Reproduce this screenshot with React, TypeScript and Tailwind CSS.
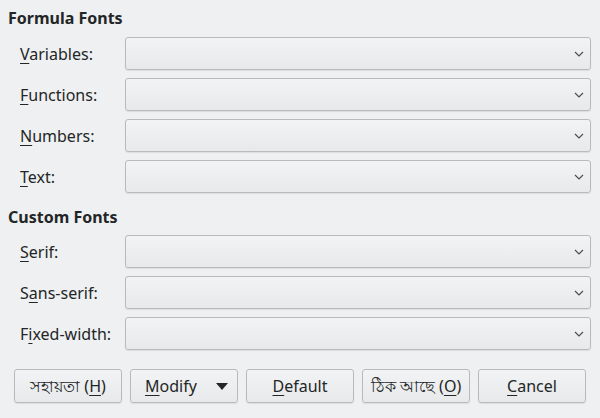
import React from 'react';

const Chevron = () => (
  <svg width="10" height="6" viewBox="0 0 10 6" className="shrink-0">
    <path d="M1 1 L5 5 L9 1" fill="none" stroke="#4b4e50" strokeWidth="1.2" />
  </svg>
);

const Combo = () => (
  <div className="flex-1 h-[33px] rounded-[3px] border border-[#b8babc] bg-gradient-to-b from-[#f2f3f4] to-[#e8e9ea] shadow-[0_1px_1px_rgba(0,0,0,0.08)] flex items-center justify-end pr-[6px]">
    <Chevron />
  </div>
);

const Row = ({ pre, key1, post }: { pre: string; key1: string; post: string }) => (
  <div className="flex items-center h-[33px]">
    <div className="w-[117px] pl-[12px] shrink-0">
      {pre}
      <span className="underline underline-offset-[3px] decoration-1">{key1}</span>
      {post}
    </div>
    <Combo />
  </div>
);

const Btn = ({ children }: { children: React.ReactNode }) => (
  <div className="w-[108px] h-[34px] rounded-[3px] border border-[#b8babc] bg-gradient-to-b from-[#f2f3f4] to-[#e8e9ea] shadow-[0_1px_1px_rgba(0,0,0,0.08)] flex items-center justify-center">
    {children}
  </div>
);

const U = ({ children }: { children: React.ReactNode }) => (
  <span className="underline underline-offset-[3px] decoration-1">{children}</span>
);

export default function App() {
  return (
    <div
      className="w-[600px] h-[418px] bg-[#eff0f1] text-[#232627] text-[16px] leading-[20px] pl-[8px] pr-[9px] pt-[8px]"
      style={{ fontFamily: '"Noto Sans", "Open Sans", sans-serif' }}
    >
      <div className="font-bold">Formula Fonts</div>
      <div className="flex flex-col gap-[8px] mt-[9px]">
        <Row pre="" key1="V" post="ariables:" />
        <Row pre="" key1="F" post="unctions:" />
        <Row pre="" key1="N" post="umbers:" />
        <Row pre="" key1="T" post="ext:" />
      </div>
      <div className="font-bold mt-[14px]">Custom Fonts</div>
      <div className="flex flex-col gap-[8px] mt-[8px]">
        <Row pre="" key1="S" post="erif:" />
        <Row pre="S" key1="a" post="ns-serif:" />
        <Row pre="F" key1="i" post="xed-width:" />
      </div>
      <div className="flex gap-[8px] mt-[19px] pl-[6px]">
        <Btn>
          <span>সহায়তা (<U>H</U>)</span>
        </Btn>
        <Btn>
          <div className="flex items-center justify-between w-full pl-[14px] pr-[9px]">
            <span><U>M</U>odify</span>
            <svg width="12" height="7" viewBox="0 0 12 7">
              <path d="M0 0 L12 0 L6 7 Z" fill="#232627" />
            </svg>
          </div>
        </Btn>
        <Btn>
          <span><U>D</U>efault</span>
        </Btn>
        <Btn>
          <span>ঠিক আছে (<U>O</U>)</span>
        </Btn>
        <Btn>
          <span><U>C</U>ancel</span>
        </Btn>
      </div>
    </div>
  );
}
